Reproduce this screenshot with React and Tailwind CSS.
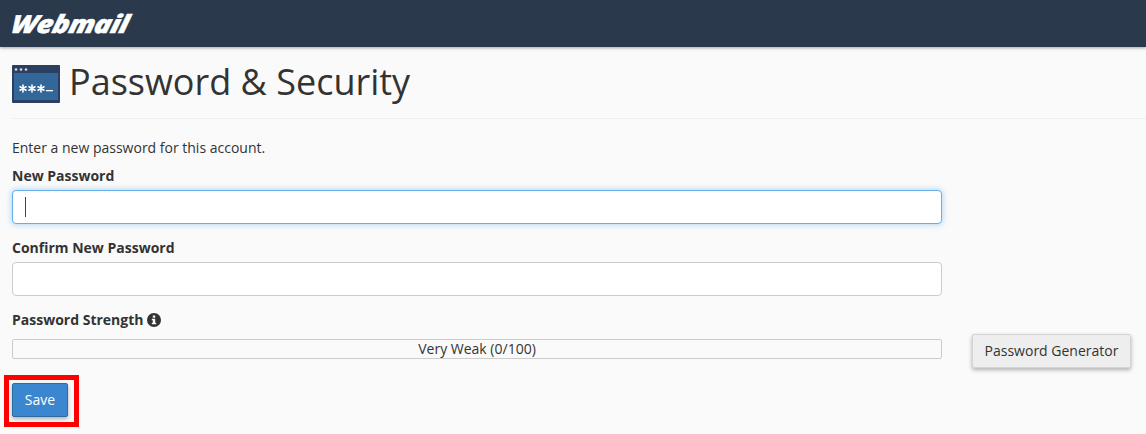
const PageIcon = () => (
  <svg width="48" height="38" viewBox="0 0 48 38" className="shrink-0">
    <rect width="48" height="38" rx="1" fill="#2b3f60" />
    <rect x="2" y="8" width="44" height="27" fill="#336699" />
    <circle cx="4" cy="4.500" r="1.300" fill="#d5dbe5" />
    <circle cx="9" cy="4.500" r="1.300" fill="#d5dbe5" />
    <circle cx="14" cy="4.500" r="1.300" fill="#d5dbe5" />
    <g stroke="#fff" strokeWidth="1.600" strokeLinecap="round">
      <path d="M11 20v7M8 21.800l6 3.400M14 21.800l-6 3.400" />
      <path d="M20 20v7M17 21.800l6 3.400M23 21.800l-6 3.400" />
      <path d="M29 20v7M26 21.800l6 3.400M32 21.800l-6 3.400" />
    </g>
    <rect x="34" y="25" width="7" height="1.300" fill="#fff" />
  </svg>
);

const InfoIcon = () => (
  <svg width="14" height="14" viewBox="0 0 14 14" className="shrink-0">
    <circle cx="7" cy="7" r="7" fill="#333" />
    <rect x="5.800" y="2.500" width="2.400" height="2.200" fill="#fafafa" />
    <path d="M4.800 5.800h3.400v4h1v1.500H4.800V9.800h1V7.300h-1z" fill="#fafafa" />
  </svg>
);

const App = () => {
  return (
    <div className="relative h-[434px] w-[1146px] overflow-hidden bg-[#fafafa] font-['Open_Sans','Noto_Sans',sans-serif] text-[14px] text-[#333]">
      <header className="flex h-[47px] items-center bg-[#2a3a4c] pl-3 shadow-[0_1px_3px_rgba(0,0,0,0.35)]">
        <span className="origin-left scale-x-[1.12] skew-x-[-12deg] text-[25px] leading-none font-extrabold italic tracking-[-0.5px] text-white [-webkit-text-stroke:0.5px_white]">
          Webmail
        </span>
      </header>

      <main className="pl-3">
        <div className="flex h-[72px] items-center gap-[9px] border-b border-[#eeeeee] pt-[2px]">
          <PageIcon />
          <h1 className="mb-[4px] text-[36px] leading-[40px] font-normal text-[#333]">Password &amp; Security</h1>
        </div>

        <p className="mt-[19px] leading-[20px]">Enter a new password for this account.</p>

        <form className="mt-[8px] flex flex-col">
          <label htmlFor="new-password" className="leading-[20px] font-bold">New Password</label>
          <div className="mt-[4px] h-[34px] w-[930px] rounded border border-[#66afe9] bg-white pt-[6px] pl-3 shadow-[0_0_6px_rgba(102,175,233,0.6)]">
            <div id="new-password" className="h-5 w-px bg-[#444]" />
          </div>

          <label htmlFor="confirm-password" className="mt-[14px] leading-[20px] font-bold">Confirm New Password</label>
          <input id="confirm-password" type="password" className="mt-[4px] h-[34px] w-[930px] rounded border border-[#cccccc] bg-white" />

          <div className="mt-[14px] flex items-center gap-[4px] leading-[20px] font-bold">
            Password Strength <InfoIcon />
          </div>

          <div className="mt-[4px] flex items-start">
            <div className="mt-[5px] h-5 w-[930px] rounded-[2px] border border-[#cccccc] text-center text-[14px] leading-[18px]">
              Very Weak (0/100)
            </div>
            <button type="button" className="ml-[30px] h-[34px] w-[159px] rounded-[2px] border border-[#d4d4d4] bg-[#eeeeee] pb-[2px] text-[14px] text-[#333] shadow-[0_2px_4px_rgba(0,0,0,0.3)]">
              Password Generator
            </button>
          </div>

          <button type="button" className="mt-[15px] h-[34px] w-[56px] rounded-[2px] border border-[#2d6ca2] bg-[#3a87d0] pb-[2px] text-[14px] text-white shadow-[0_2px_4px_rgba(0,0,0,0.3)]">
            Save
          </button>
        </form>
      </main>

      {/* annotation drawn on top of the screenshot */}
      <div className="pointer-events-none absolute top-[375px] left-[4px] h-[52px] w-[75px] border-[5px] border-[#ff0000]" />
    </div>
  );
};

export default App;
